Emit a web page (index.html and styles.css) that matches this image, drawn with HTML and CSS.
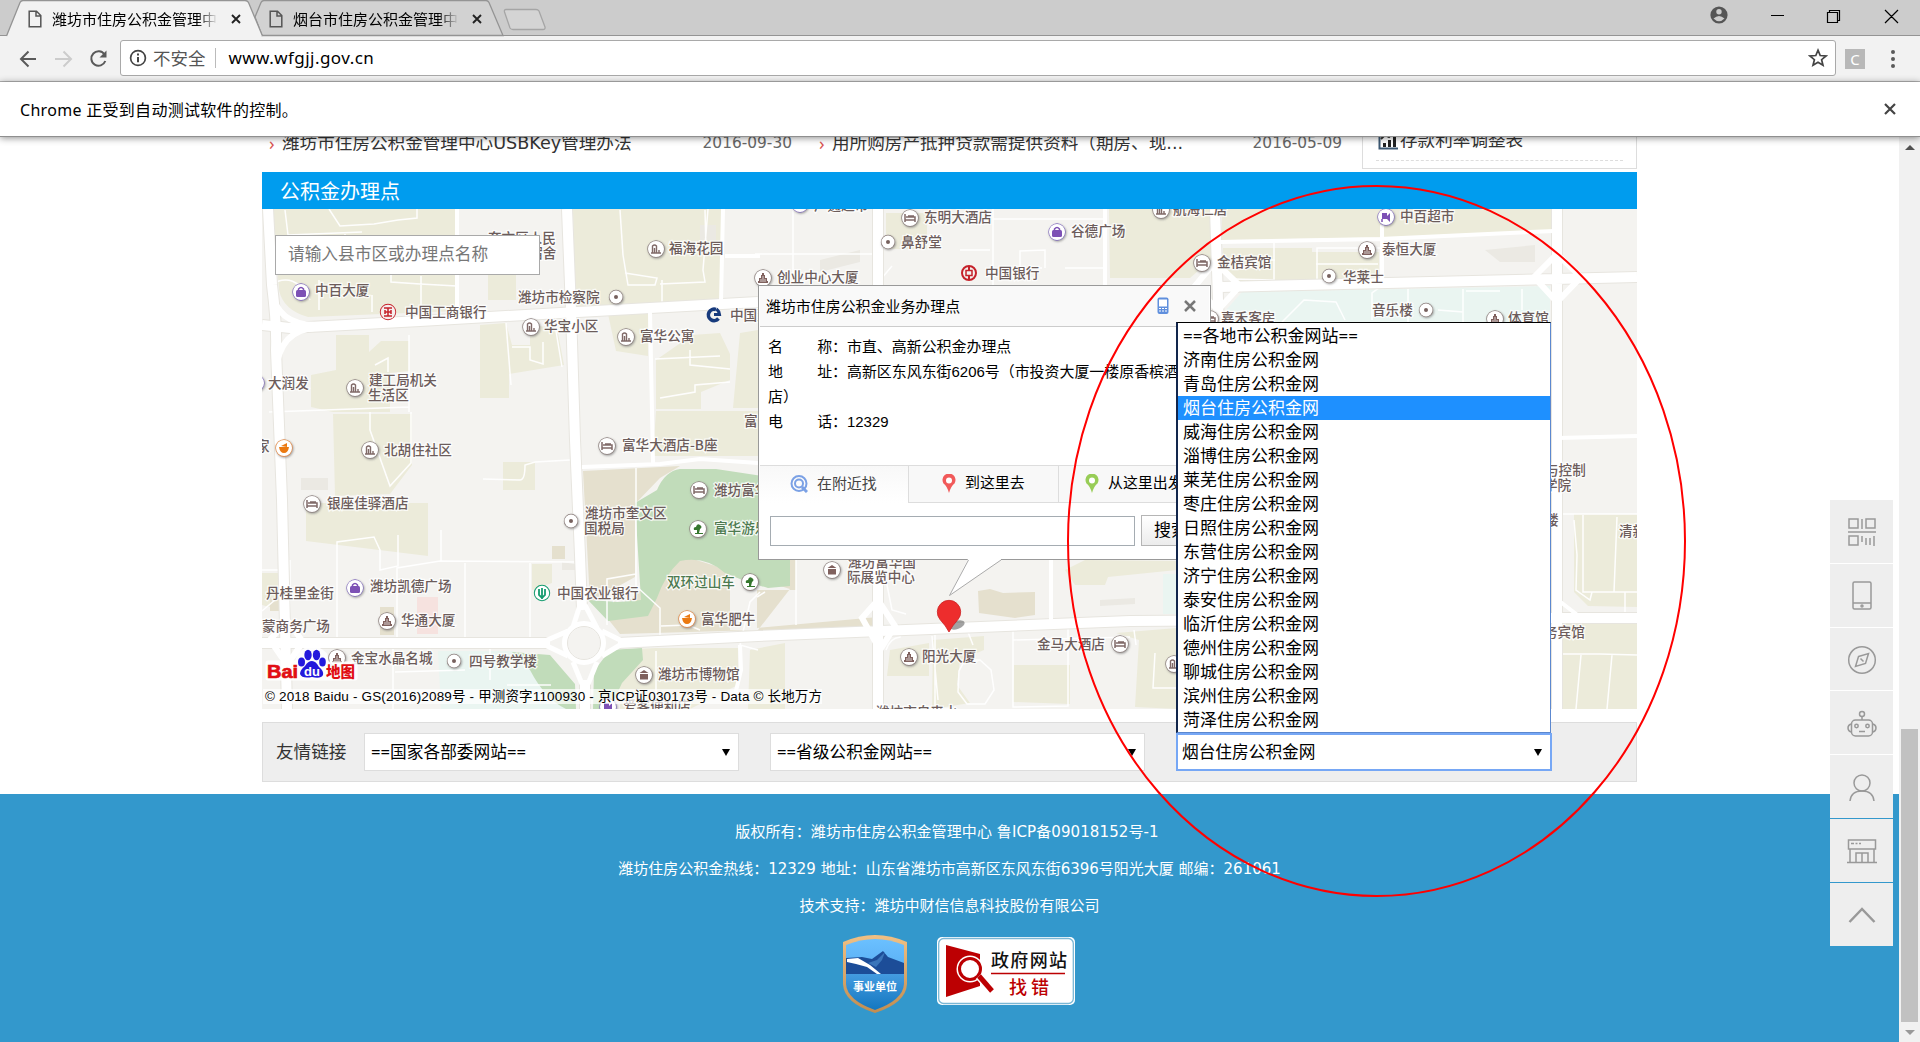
FILE: index.html
```html
<!DOCTYPE html>
<html lang="zh-CN">
<head>
<meta charset="utf-8">
<title>潍坊市住房公积金管理中心</title>
<link rel="stylesheet" href="styles.css">
</head>
<body>
<div class="tabstrip">
  <div class="tab tab-active">
    <svg class="tab-shape" width="256" height="36" viewBox="0 0 256 36"><path d="M-1.500 36L12 2.500Q13 .5 15 .5H237Q239.500 .5 240.500 2.500L254.500 36" fill="#f2f2f2" stroke="#949494" stroke-width="1.300"/></svg>
    <svg class="doc" width="14" height="18" viewBox="0 0 14 18"><path d="M1.200 1.200H8.500L12.800 5.500V16.800H1.200ZM8 1.500V6H12.500" fill="none" stroke="#555" stroke-width="1.500"/></svg>
    <span class="tab-title">潍坊市住房公积金管理中心</span>
    <svg class="x" width="10" height="10" viewBox="0 0 10 10"><path d="M1 1L9 9M9 1L1 9" stroke="#222" stroke-width="1.900"/></svg>
  </div>
  <div class="tab tab-second">
    <svg class="tab-shape" width="250" height="36" viewBox="0 0 250 36"><path d="M1 17L7 2.500Q8 .5 10 .5H232Q234 .5 235 2.500L249 35.500H8Z" fill="#d2d2d2" stroke="#949494" stroke-width="1.300"/></svg>
    <svg class="doc" width="14" height="18" viewBox="0 0 14 18"><path d="M1.200 1.200H8.500L12.800 5.500V16.800H1.200ZM8 1.500V6H12.500" fill="none" stroke="#555" stroke-width="1.500"/></svg>
    <span class="tab-title">烟台市住房公积金管理中心</span>
    <svg class="x" width="10" height="10" viewBox="0 0 10 10"><path d="M1 1L9 9M9 1L1 9" stroke="#222" stroke-width="1.900"/></svg>
  </div>
  <svg class="newtab" width="44" height="24" viewBox="0 0 44 24"><path d="M3 1.500H33Q35 1.500 36 3L42 19Q42.500 21.500 40 21.500H10Q8 21.500 7 20L1.500 4Q1 1.500 3 1.500Z" fill="#d4d4d4" stroke="#a5a5a5" stroke-width="1.300"/></svg>
  <svg class="window-buttons" width="190" height="34" viewBox="1710 0 190 34" fill="none" stroke="#000" stroke-width="1.200">
    <circle cx="1719" cy="15" r="8.600" fill="#555" stroke="none"/><circle cx="1719" cy="11.800" r="2.700" fill="#ccc" stroke="none"/><path d="M1713.500 18.500Q1719 13.500 1724.500 18.500Q1719 24 1713.500 18.500Z" fill="#ccc" stroke="none"/>
    <path d="M1771 15.500H1784M1827.500 12.500H1837.500V22.500H1827.500ZM1829.500 12.500V10.500H1839.500V20.500H1837.500M1885 10L1898 23M1898 10L1885 23"/>
  </svg>
</div>
<div class="toolbar">
  <svg class="nav" width="120" height="44" viewBox="0 36 120 44" fill="none" stroke="#5a5a5a" stroke-width="2">
    <path d="M36 58H21.500M28.500 50.500L21 58L28.500 65.500"/>
    <path d="M55 58H70M63.500 50.500L71 58L63.500 65.500" stroke="#ccc"/>
    <path d="M104.500 53.500A7.200 7.200 0 1 0 105.300 60"/><path d="M106.500 49.500V56.500H99.500Z" fill="#5a5a5a" stroke="none"/>
  </svg>
  <div class="omnibox">
    <svg width="18" height="18" viewBox="0 0 18 18"><circle cx="9" cy="9" r="7.400" fill="none" stroke="#444" stroke-width="1.700"/><path d="M9 8V13.200M9 4.500V6.500" stroke="#444" stroke-width="2"/></svg>
    <span class="insecure">不安全</span><i class="sep"></i><span class="url">www.wfgjj.gov.cn</span>
    <svg class="star" width="20" height="20" viewBox="0 0 20 20"><path d="M10 2.200L12.200 7.500L18 8L13.600 11.700L15 17.300L10 14.300L5 17.300L6.400 11.700L2 8L7.800 7.500Z" fill="none" stroke="#444" stroke-width="1.700"/></svg>
  </div>
  <span class="ext">C</span>
  <svg class="dots" width="6" height="20" viewBox="0 0 6 20" fill="#5a5a5a"><circle cx="3" cy="3" r="2"/><circle cx="3" cy="10" r="2"/><circle cx="3" cy="17" r="2"/></svg>
</div>
<div class="infobar">
  <span>Chrome 正受到自动测试软件的控制。</span>
  <svg width="12" height="12" viewBox="0 0 12 12"><path d="M1 1L11 11M11 1L1 11" stroke="#444" stroke-width="2.200"/></svg>
</div>
<div class="viewport">
<div class="page">
  <div class="content">
    <div class="news">
      <div class="news-item first"><b>›</b><span class="news-title">潍坊市住房公积金管理中心USBKey管理办法</span><time>2016-09-30</time></div>
      <div class="news-item"><b>›</b><span class="news-title">用所购房产抵押贷款需提供资料（期房、现...</span><time>2016-05-09</time></div>
      <div class="rates"><div class="rate-row">
        <svg width="20" height="18" viewBox="0 0 20 18"><path d="M1.500 0V16.500H20" stroke="#3c5873" stroke-width="2" fill="none"/><path d="M5 15V11H8V15ZM10 15V8H13V15ZM15 15V5H18V15Z" fill="#222"/><path d="M3 7L7 3L11 5L17 0" stroke="#333" stroke-width="2" fill="none"/></svg>
        <span>存款利率调整表</span></div></div>
    </div>
    <h2>公积金办理点</h2>
    <div class="map">
      <svg class="map-canvas" width="1375" height="500" viewBox="262 209 1375 500">
        <defs>
          <filter id="sh" x="-30%" y="-30%" width="170%" height="170%"><feDropShadow dx=".8" dy="1" stdDeviation=".8" flood-color="#777" flood-opacity=".7"/></filter>
          <g id="disc"><circle r="8" fill="#fff" stroke="#8d807e" stroke-width="1.400" filter="url(#sh)"/></g>
          <g id="house"><use href="#disc"/><path d="M-3.500 4V-3Q-1.500 -5 .5 -3V4M-1.500 4V-1M3 4V1M5 4H-5" stroke="#806a68" stroke-width="1.400" fill="none"/></g>
          <g id="hotel"><use href="#disc"/><path d="M-5 -4V4M-5 2H5V4M-4 -1H5V2M-2 -2H4" stroke="#806a68" stroke-width="1.500" fill="none"/></g>
          <g id="tower"><use href="#disc"/><path d="M-5 5V3H-4V0H-2V-3H-1V-5H1V-3H2V0H4V3H5V5Z" fill="#80615e"/><path d="M-2 1V4M0 -2V4M2 1V4" stroke="#fff" stroke-width=".7"/></g>
          <g id="dot"><circle r="6.500" fill="#fff" stroke="#8d807e" stroke-width="1.400" filter="url(#sh)"/><circle r="2" fill="#76615e"/></g>
          <g id="bag"><circle r="8" fill="#fff" stroke="#8069bd" stroke-width="1.300" filter="url(#sh)"/><rect x="-5" y="-2" width="10" height="7" rx="1.500" fill="#7d51b5"/><path d="M-2.500 -1V-3Q0 -6 2.500 -3V-1" stroke="#7d51b5" stroke-width="1.500" fill="none"/></g>
          <g id="cart"><circle r="8" fill="#fff" stroke="#8069bd" stroke-width="1.300" filter="url(#sh)"/><path d="M-4 -4H1V2H-4ZM1 -1L4 -4V5L1 2" fill="#7d51b5"/><path d="M-4 5V2" stroke="#7d51b5" stroke-width="1.500"/></g>
          <g id="food"><circle r="8" fill="#fff" stroke="#e08a45" stroke-width="1.400" filter="url(#sh)"/><path d="M-5 -1H5Q4 5 0 5Q-4 5 -5 -1ZM-3 -2L3 -5V-1Z" fill="#eb7911"/></g>
          <g id="tree"><use href="#disc"/><path d="M-4 1Q-5 -2 -2 -2Q-1 -6 2 -4Q5 -2 2 0L1 4H5V5H-3V4H-1V1Z" fill="#36772e"/></g>
          <g id="museum"><use href="#disc"/><path d="M-4.500 -2L0 -5L4.500 -2ZM-4 -1H4V4.500H-4Z" fill="#80615e"/><path d="M-2 0V3M0 0V3M2 0V3" stroke="#fff"/></g>
        </defs>
        <rect x="262" y="209" width="1375" height="500" fill="#f4f3f0"/>
        <g fill="#ecebda">
          <path d="M273 209H457V311L308 317Q283 310 279 290ZM488 243H516V300H488ZM573 209H721V302L575 306ZM480 325L506 323 512 345H530V325L557 328 564 365 509 374V398H480ZM336 335H369V352L381 341H409V371L390 373V412H333L311 407V375L336 370ZM333 414H412V465L390 494 335 496ZM306 503H428V556L306 541ZM608 314H648V356L616 351ZM656 360L692 335 720 333 730 354V380L701 392 701 409H656ZM656 411H758V456H653ZM503 462H535V490H503ZM532 564H552V583L532 590ZM262 573H281V610L262 605Z"/>
          <path d="M886 213H927V249H886ZM1109 209H1213V258L1190 278H1110ZM1222 209H1554V231L1466 236 1222 240ZM1223 248H1312V252H1379V282H1232L1222 265ZM1574 514H1637V607L1588 606 1574 592ZM1554 622H1637V709H1554ZM740 333L758 330V408H733ZM656 648H738V685L690 709H620L618 650ZM750 650L785 643V709H748ZM890 650L929 643V676H887ZM933 640L984 636V650L960 660L957 685 970 703 932 709ZM1014 665H1070V704L1013 702ZM1065 570L1085 560 1177 561V570L1108 577 1105 585H1075ZM1116 633L1177 628V709L1135 707 1139 640ZM1175 561H1200V570H1175Z"/>
        </g>
        <g fill="#ebe9e3"><path d="M276 415L284 420 285 465 278 466ZM301 478H328V490H301ZM445 250H480V262H445ZM820 260L860 250V262L820 272ZM580 565L562 562V570H580ZM700 225V240H716V225ZM1100 600L1135 598V604L1100 606ZM1485 250L1500 262H1535V245Z"/></g>
        <g fill="#eaf5f1"><path d="M1226 310L1242 292 1550 286V330H1226ZM438 651H512L535 660 551 684 570 709H441ZM1163 574H1177V614H1163Z"/></g>
        <path d="M583 471L680 466 660 478 635 504V577L590 602ZM680 555L790 589 758 630 620 634 608 619ZM796 560H878V617L757 628V590H796ZM978 591L990 589 1003 593 1035 592V615L1015 618 979 613ZM886 560H730V630H878ZM552 546H565V559H552ZM270 597H282V611H270ZM380 607H394V635H380Z" fill="#e5e0ce"/>
        <path d="M635 503L657 490Q665 471 680 469L716 469 790 480 790 586 768 588Q745 582 725 573Q706 556 680 561Q665 575 657 598L648 616 608 621 588 600 618 602 641 600ZM512 652L550 655 575 684 576 709H566Q545 699 530 670ZM642 648L610 650 594 671 593 709H610L622 683 643 660Z" fill="#c1dcba"/>
        <rect x="417" y="597" width="21" height="37" fill="#f6e2df"/>
        <g stroke="#fff" fill="none" stroke-width="1.500" opacity=".95">
          <path d="M285 210L288 235L362 232M329 209L340 226 374 224 398 220 417 218V209M281 245H345V232M391 275V282L420 284 457 286M421 276V310M319 280V310M372 312V295M270 285Q295 270 310 300M620 210L623 255 628 285 655 285 657 278 625 273M708 209L703 270 705 282 660 284M662 280V311M706 250L705 210M506 323L511 385M512 347H530V360L543 364 543 342M555 325L562 367M409 335V412M388 372V358L375 365M655 359L720 356M690 350V365L730 369M660 398L695 392V385L730 382M269 412L409 407M370 412V430L390 486 411 463V412"/>
          <path d="M262 570H281M337 645V542L374 537 380 550V570L398 566V535M397 640V568L440 561 574 562M441 561V530M465 563V643M530 563V641M483 479L520 480Q525 480 525 465L535 462 570 460M607 625V579L636 574M636 468V586L660 608V635M661 626L688 625 700 630M760 592L750 602 740 645 758 650M656 651V709M393 644V709M465 670L395 672M507 685H551M490 645V680M290 560V640M262 611L275 600"/>
          <path d="M793 209V285M755 254H876M892 266L876 285M993 209V285M993 219H1105M960 250H990M1045 268V250L1020 251V268M1065 268H1103M1001 268H1042M1317 282V248H1382M1274 243V280L1232 279M1232 260H1275M1316 264H1378M1408 289V322M1463 289V322M1522 289V310M1466 291H1500M1282 322L1304 300 1336 302 1345 320M1438 310 1463 312M1383 285L1372 293V320"/>
          <path d="M796 560V625M757 597L765 592M882 560L892 610 906 614M886 650Q890 638 900 637V624M935 635V709M932 636L938 700M968 632 973 645M1013 630V707L1068 706V628M1013 640 1130 637M1134 630 1136 645M965 660L980 660 991 670 994 690 985 704 967 704 958 692 959 671ZM1155 653 1153 688 1177 688M1557 514H1637M1583 515V592H1637M1574 520 1577 555 1576 590 1590 600 1592 592M1617 517 1614 592M1560 654H1600L1637 655M1581 655 1576 709M1612 655 1607 709M1625 592V615"/>
        </g>
        <g stroke="#e7e5df" fill="none" stroke-width="12"><path d="M268 209L272 285Q277 325 276 350L282 500 287 709M567 209L571 310 575 440 580 555 582 610M585 680V709"/><path d="M262 325L290 328 420 321 560 313 758 302M262 643H550M618 643L758 636 1130 621 1552 618H1637M878 209V285M878 560V709M1215 209L1219 330M1220 287L1637 277M1557 209V709"/></g>
        <g stroke="#fff" fill="none" stroke-width="10"><path d="M268 209L272 285Q277 325 276 350L282 500 287 709M567 209L571 310 575 440 580 555 582 610M585 680V709"/><path d="M262 325L290 328 420 321 560 313 758 302M262 643H550M618 643L758 636 1130 621 1552 618H1637M878 209V285M878 560V709M1215 209L1219 330M1220 287L1637 277M1557 209V709"/></g>
        <g stroke="#fff" fill="none" stroke-width="4"><path d="M457 209V315M723 209L721 302M725 256H760M650 311L653 463M582 467L660 464 700 459 758 463M1105 209V285M1220 242L1380 239 1466 235 1554 231M1382 225V288M1051 560V620M1558 438L1637 436M1558 600L1580 617M740 645 741 670 735 695"/></g>
        <g stroke="#fff" fill="none" stroke-width="6"><path d="M272 290Q276 324 315 325M276 370Q280 330 315 328M1195 286L1215 262 1240 286 1218 310ZM1534 277L1557 254 1581 277 1557 302ZM862 618L878 600 895 626 880 650ZM270 640L287 620 303 642 287 665Z"/></g>
        <g stroke="#fff" fill="none" stroke-width="5"><path d="M545 641L568 631M545 645L568 656M620 640L602 631M620 645L602 656M580 605L573 627M585 605L597 628M582 684L573 662M588 684L597 662"/></g>
        <circle cx="584" cy="643" r="19" fill="#f4f3f0" stroke="#fff" stroke-width="6"/><circle cx="584" cy="643" r="16.500" fill="none" stroke="#e6e4de"/>
        <g class="poi">
          <text x="488" y="243">奎文区人民</text><text x="502" y="258">法院宿舍</text>
          <use href="#bag" x="301" y="292"/><text x="315" y="295">中百大厦</text>
          <g transform="translate(388 312)"><circle r="7.300" fill="#f6eeee" stroke="#c5222b" stroke-width="1.800"/><path d="M-4 -4H4M-4 4H4M-3 0H3M0 -4V4M-3 -2V2M3 -2V2" stroke="#c5222b" stroke-width="1.500"/></g><text x="405" y="317">中国工商银行</text>
          <text x="518" y="302">潍坊市检察院</text><use href="#dot" x="616" y="297"/>
          <use href="#house" x="531" y="327"/><text x="544" y="331">华宝小区</text>
          <use href="#house" x="626" y="337"/><text x="640" y="341">富华公寓</text>
          <use href="#house" x="656" y="249"/><text x="669" y="253">福海花园</text>
          <use href="#bag" x="256" y="383"/><text x="268" y="388">大润发</text>
          <use href="#house" x="355" y="388"/><text x="369" y="385">建工局机关</text><text x="368" y="400">生活区</text>
          <text x="256" y="451">家</text><use href="#food" x="284" y="448"/>
          <use href="#house" x="370" y="450"/><text x="384" y="455">北胡住社区</text>
          <use href="#hotel" x="607" y="446"/><text x="622" y="450">富华大酒店-B座</text><text x="744" y="426">富</text>
          <use href="#hotel" x="312" y="504"/><text x="327" y="508">银座佳驿酒店</text>
          <use href="#hotel" x="699" y="490"/><text x="714" y="495">潍坊富华</text>
          <use href="#dot" x="571" y="521"/><text x="585" y="518">潍坊市奎文区</text><text x="584" y="533">国税局</text>
          <use href="#tree" x="698" y="529"/><text class="green" x="714" y="533">富华游乐园</text>
          <text class="green" x="667" y="587">双环过山车</text><use href="#tree" x="750" y="582"/>
          <text x="266" y="598">丹桂里金街</text><use href="#bag" x="355" y="588"/><text x="370" y="591">潍坊凯德广场</text>
          <text x="262" y="631">蒙商务广场</text><use href="#tower" x="387" y="621"/><text x="401" y="625">华通大厦</text>
          <g transform="translate(542 593)"><circle r="7.200" fill="#fff" stroke="#159c6f" stroke-width="2"/><path d="M0 -5V6M-3 -4V2L0 5L3 2V-4" fill="none" stroke="#159c6f" stroke-width="1.800"/></g><text x="557" y="598">中国农业银行</text>
          <use href="#food" x="687" y="619"/><text x="701" y="624">富华肥牛</text>
          <use href="#tower" x="337" y="658"/><text x="351" y="663">金宝水晶名城</text>
          <use href="#dot" x="454" y="661"/><text x="469" y="666">四号教学楼</text>
          <use href="#museum" x="644" y="675"/><text x="658" y="679">潍坊市博物馆</text>
          <use href="#cart" x="608" y="707"/><text x="623" y="711">爱客便利店</text>
          <use href="#bag" x="800" y="204"/><text x="814" y="210">广通超市</text>
          <use href="#hotel" x="910" y="218"/><text x="924" y="222">东明大酒店</text>
          <use href="#dot" x="888" y="242"/><text x="901" y="247">鼻舒堂</text>
          <use href="#bag" x="1057" y="232"/><text x="1071" y="236">谷德广场</text>
          <use href="#tower" x="763" y="278"/><text x="777" y="282">创业中心大厦</text>
          <g transform="translate(969 273)" fill="none" stroke="#c5222b" stroke-width="2"><circle r="7"/><rect x="-3" y="-2.500" width="6" height="5" stroke-width="1.500"/><path d="M0 -7V-3M0 3V7"/></g><text x="985" y="278">中国银行</text>
          <g fill="none" stroke="#173a7c"><path d="M716 309.500A5.700 5.700 0 1 0 718.500 318.500" stroke-width="3.600"/><path d="M714 314.500H719.500Q719 311 716.500 309" stroke-width="3"/></g><text x="730" y="320">中国建设银行</text>
          <use href="#house" x="1161" y="210"/><text x="1173" y="214">航海仁居</text>
          <use href="#hotel" x="1202" y="263"/><text x="1217" y="267">金桔宾馆</text>
          <use href="#hotel" x="1210" y="319"/><text x="1221" y="323">嘉禾客房</text>
          <use href="#cart" x="1386" y="217"/><text x="1400" y="221">中百超市</text>
          <use href="#tower" x="1367" y="250"/><text x="1382" y="254">泰恒大厦</text>
          <use href="#dot" x="1329" y="276"/><text x="1343" y="282">华莱士</text>
          <text x="1372" y="315">音乐楼</text><use href="#dot" x="1426" y="310"/>
          <use href="#tower" x="1495" y="319"/><text x="1508" y="323">体育馆</text>
          <use href="#museum" x="832" y="570"/><text x="848" y="567">潍坊富华国</text><text x="847" y="582">际展览中心</text>
          <text x="1037" y="649">金马大酒店</text><use href="#hotel" x="1120" y="644"/>
          <use href="#tower" x="909" y="657"/><text x="922" y="661">阳光大厦</text>
          <use href="#house" x="1174" y="664"/><text x="876" y="717">潍坊市自来水</text>
          <text x="1545" y="475">与控制</text><text x="1544" y="490">学院</text><text x="1545" y="525">楼</text>
          <text x="1619" y="536">清新</text><text x="1544" y="637">务宾馆</text>
        </g>
        <ellipse cx="957" cy="625" rx="8" ry="4" fill="#555" opacity=".55" transform="rotate(-20 957 625)"/>
        <path d="M949 632Q946 626 940 619.500A11.700 11.700 0 1 1 958 619.500Q952 626 949 632Z" fill="#ed2d2d" stroke="#cb2325" stroke-width=".8"/>
        <path d="M268 663H297L300 655Q312 642 325 655L326 664H355V678H268Z" stroke="#fff" stroke-width="5" stroke-linejoin="round" fill="#fff" opacity=".9"/>
        <text class="logo-bai" x="267" y="677.500" textLength="31" lengthAdjust="spacingAndGlyphs">Bai</text>
        <g fill="#2319dc"><ellipse cx="301.500" cy="662" rx="3.500" ry="4.600"/><ellipse cx="308" cy="655" rx="3.700" ry="5.200"/><ellipse cx="316.500" cy="655" rx="3.700" ry="5.200"/><ellipse cx="322.500" cy="662" rx="3.300" ry="4.600"/><path d="M312 661Q316 661 319 667Q324 671 323 675Q321 679 312 677Q302 679 300 674Q300 670 305 666Q308 661 312 661Z"/></g>
        <text class="logo-du" x="304" y="676">du</text>
        <text class="logo-map" x="326" y="676.500">地图</text>
        <rect x="263" y="689" width="559" height="15" fill="#fff" opacity=".7"/>
        <text class="copyright" x="265" y="701" textLength="557">© 2018 Baidu - GS(2016)2089号 - 甲测资字1100930 - 京ICP证030173号 - Data © 长地万方</text>
      </svg>
      <div class="map-search">请输入县市区或办理点名称</div>
      <div class="popup">
        <div class="popup-head"><span>潍坊市住房公积金业务办理点</span>
          <svg width="12" height="18" viewBox="0 0 12 18"><rect x=".5" y=".5" width="11" height="16.500" rx="2" fill="#5f8fdd"/><rect x="2" y="2.500" width="8" height="7" fill="#fff"/><path d="M2 11.500H10M2 14H10" stroke="#fff" stroke-dasharray="2 1"/></svg>
          <svg class="px" width="12" height="12" viewBox="0 0 12 12"><path d="M1 1L11 11M11 1L1 11" stroke="#777" stroke-width="2.500"/></svg>
        </div>
        <div class="popup-body">
          <div><span class="k"><i>名</i><i>称：</i></span>市直、高新公积金办理点</div>
          <div><span class="k"><i>地</i><i>址：</i></span>高新区东风东街6206号（市投资大厦一楼原香槟酒店）</div>
          <div><span class="k"><i>电</i><i>话：</i></span>12329</div>
        </div>
        <div class="popup-tabs">
          <div class="on"><svg width="18" height="18" viewBox="0 0 18 18" fill="none" stroke="#7ba1e5"><circle cx="9" cy="8.500" r="7.500" stroke-width="2"/><circle cx="9" cy="8.500" r="4" stroke-width="2"/><path d="M12 12L17 17" stroke-width="3"/></svg>在附近找</div>
          <div><svg width="14" height="19" viewBox="0 0 14 19"><path d="M7 19Q5 12 1.500 9.500A6.500 6.500 0 1 1 12.500 9.500Q9 12 7 19Z" fill="#f15a5a"/><circle cx="7" cy="6.500" r="3" fill="#fff"/></svg>到这里去</div>
          <div><svg width="14" height="19" viewBox="0 0 14 19"><path d="M7 19Q5 12 1.500 9.500A6.500 6.500 0 1 1 12.500 9.500Q9 12 7 19Z" fill="#98cd57"/><circle cx="7" cy="6.500" r="3" fill="#fff"/></svg>从这里出发</div>
        </div>
        <div class="popup-find"><div class="field"></div><div class="btn">搜索</div></div>
        <svg class="tail" width="60" height="40" viewBox="945 559 60 40"><path d="M968 559L949.500 595.500L1001 560V559Z" fill="#fff"/><path d="M968.500 560L949.500 595.500L1001 560" fill="none" stroke="#aaa"/></svg>
      </div>
    </div>
    <div class="links">
      <label>友情链接</label>
      <div class="select">==国家各部委网站==<i></i></div>
      <div class="select">==省级公积金网站==<i></i></div>
      <div class="select focus">烟台住房公积金网<i></i>
        <ul class="options"><li>==各地市公积金网站==</li><li>济南住房公积金网</li><li>青岛住房公积金网</li><li class="sel">烟台住房公积金网</li><li>威海住房公积金网</li><li>淄博住房公积金网</li><li>莱芜住房公积金网</li><li>枣庄住房公积金网</li><li>日照住房公积金网</li><li>东营住房公积金网</li><li>济宁住房公积金网</li><li>泰安住房公积金网</li><li>临沂住房公积金网</li><li>德州住房公积金网</li><li>聊城住房公积金网</li><li>滨州住房公积金网</li><li>菏泽住房公积金网</li></ul>
      </div>
    </div>
  </div>
  <footer>
    <p class="l1">版权所有：潍坊市住房公积金管理中心 鲁ICP备09018152号-1</p>
    <p class="l2">潍坊住房公积金热线：12329 地址：山东省潍坊市高新区东风东街6396号阳光大厦 邮编：261061</p>
    <p>技术支持：潍坊中财信信息科技股份有限公司</p>
    <div class="badges">
      <svg width="66" height="80" viewBox="842 934 66 80">
        <defs><linearGradient id="gold" x2="0" y2="1"><stop offset="0" stop-color="#f0c084"/><stop offset="1" stop-color="#c18d51"/></linearGradient><linearGradient id="sky" x2="0" y2="1"><stop offset="0" stop-color="#6bc0ff"/><stop offset="1" stop-color="#57adf2"/></linearGradient><linearGradient id="low" x2="0" y2="1"><stop offset="0" stop-color="#449be0"/><stop offset="1" stop-color="#1377c0"/></linearGradient></defs>
        <path d="M843 942Q875 928 907 942V984Q906 1003 875 1013Q844 1003 843 984Z" fill="url(#gold)"/>
        <path d="M846 945Q875 933 904 945V974H846Z" fill="url(#sky)"/><path d="M846 974H904V984Q903 1000 875 1010Q847 1000 846 984Z" fill="url(#low)"/>
        <path d="M846 958L862 957 872 959 883 951 888 957 904 963V974H846Z" fill="#1c4d98"/>
        <path d="M847 959L858 958 870 965 881 974H877L867 967 856 964 847 962Z" fill="#fff"/><path d="M868 963L877 960 885 952 882 960 876 967Z" fill="#3a75ba"/>
        <text class="unit" x="853" y="991" textLength="44">事业单位</text>
      </svg>
      <svg width="138" height="68" viewBox="937 937 138 68">
        <rect x="937" y="937" width="138" height="68" rx="5" fill="#fff"/><rect x="938.700" y="938.500" width="134.600" height="65" rx="5" fill="#fff" stroke="#7bb7d5" stroke-width="1.300"/>
        <path d="M946 945L980 954V986L946 997Z" fill="#bc0002"/>
        <circle cx="970" cy="969" r="13.500" fill="#fff"/><circle cx="970" cy="969" r="10.500" fill="#fff" stroke="#bc0002" stroke-width="3"/><path d="M979 976L993 992" stroke="#fff" stroke-width="8"/><path d="M979 976L992 991" stroke="#bc0002" stroke-width="5"/>
        <text class="gov" x="991" y="967" textLength="76">政府网站</text><path d="M991 973.500H1065" stroke="#bc0002" stroke-width="1.500"/><text class="gov red" x="1009" y="994" textLength="40">找错</text>
      </svg>
    </div>
  </footer>
  <aside>
    <div><svg width="28" height="28" viewBox="0 0 28 28"><path d="M1 1H10V10H1ZM18 1H27V10H18ZM14 1V11M0 14H28M1 18H10V27H1ZM14 18V24M18 20V27M22 20V27M26 18V28"/></svg></div>
    <div><svg width="20" height="30" viewBox="0 0 20 30"><rect x="1" y="1" width="18" height="27" rx="1.500"/><path d="M1 22H19"/><circle cx="10" cy="25" r="1"/></svg></div>
    <div><svg width="30" height="30" viewBox="0 0 30 30"><circle cx="15" cy="15" r="13.300"/><path d="M11.500 11.500L21.500 8.500 18.500 18.500 8.500 21.500ZM13.500 13.500L16.500 16.500"/></svg></div>
    <div class="robot"><svg width="30" height="28" viewBox="0 0 30 28"><rect x="4.500" y="10" width="21" height="16" rx="4"/><circle cx="15" cy="4" r="2.500"/><path d="M15 6.500V10M4 14Q1 15 1 18Q1 21 4 22M26 14Q29 15 29 18Q29 21 26 22M12 21.500H18"/><circle cx="9.500" cy="16" r="1.700"/><circle cx="20.500" cy="16" r="1.700"/></svg></div>
    <div><svg width="28" height="30" viewBox="0 0 28 30"><circle cx="14" cy="10" r="8"/><path d="M2 28Q3 18 14 18Q25 18 26 28"/></svg></div>
    <div><svg width="30" height="26" viewBox="0 0 30 26"><path d="M1.500 2H28.500V11H1.500ZM3 11V24M27 11V24M0 24.500H30M9 24V15H21V24M15 15V24M4 5.500H7M8.500 5.500H10.500M12 5.500H14"/></svg></div>
    <div><svg width="28" height="18" viewBox="0 0 28 18"><path d="M1.500 16L14 3L26.500 16" stroke-width="2.500"/></svg></div>
  </aside>
  <svg class="annotation" width="630" height="720" viewBox="1062 181 630 720"><ellipse cx="1376.500" cy="541" rx="308.500" ry="355" fill="none" stroke="#f00" stroke-width="2"/></svg>
</div>
<div class="scrollbar"><i class="up"></i><i class="thumb"></i><i class="down"></i></div>
</div>
</body>
</html>
```
FILE: styles.css
```css
* { box-sizing: border-box; }
body { margin: 0; height: 1042px; overflow: hidden; display: flex; flex-direction: column; background: #fff; font-family: "Noto Sans", "Noto Sans CJK SC", sans-serif; color: #000; }
i { font-style: normal; }
svg { flex: none; display: block; }

.tabstrip { height: 36px; flex: none; background: #ccc; border-bottom: 1px solid #949494; display: flex; padding-left: 8px; }
.tab { position: relative; height: 36px; display: flex; align-items: center; padding: 2px 0 0 20px; }
.tab-active { width: 254px; z-index: 2; }
.tab-second { width: 241px; padding-left: 7px; }
.tab-shape { position: absolute; left: 0; top: 0; overflow: visible; }
.tab-second .tab-shape { left: -8px; }
.doc, .tab .x { position: relative; }
.tab-title { position: relative; width: 167px; margin-left: 10px; overflow: hidden; white-space: nowrap; font-size: 15px; line-height: 22px; -webkit-mask-image: linear-gradient(90deg, #000 145px, transparent 166px); }
.tab .x { margin-left: 12px; }
.newtab { margin-top: 8px; }
.window-buttons { margin-left: auto; margin-right: 20px; }

.toolbar { height: 46px; flex: none; background: #f2f2f2; border-bottom: 1px solid #b5b5b5; display: flex; align-items: center; }
.omnibox { width: 1716px; height: 36px; margin-bottom: 1px; border: 1px solid #a9a9a9; border-radius: 3px; background: #fff; display: flex; align-items: center; padding-left: 8px; font-size: 17px; line-height: 24px; }
.insecure { margin-left: 6px; color: #555; font-size: 17.500px; }
.sep { width: 1px; height: 20px; background: #bbb; margin: 0 13px 0 9px; }
.url { font-size: 17px; letter-spacing: .45px; }
.star { margin-left: auto; margin-right: 7px; }
.ext { width: 20px; height: 20px; margin-left: 9px; background: #b8b8b8; color: #fff; text-align: center; font-size: 15px; line-height: 20px; }
.dots { margin-left: 25px; }

.infobar { height: 55px; flex: none; position: relative; z-index: 5; background: #fff; border-bottom: 1px solid #8f8f8f; box-shadow: 0 1px 7px rgba(0,0,0,.45); display: flex; align-items: center; justify-content: space-between; padding: 0 24px 1px 20px; font-size: 16px; letter-spacing: .3px; }

.viewport { flex: 1; min-height: 0; display: flex; }
.page { position: relative; width: 1899px; overflow: hidden; }
.content { width: 1375px; margin-left: 262px; }
.news { height: 35px; display: flex; }
.news-item { width: 550px; height: 24px; margin-top: -6px; padding-left: 7px; display: flex; align-items: center; white-space: nowrap; font-size: 17.600px; line-height: 24px; color: #333; }
.news-title { font-family: "DejaVu Sans", "Noto Sans CJK SC", sans-serif; font-size: 17.600px; }
.news-item b { width: 13px; color: #d9534f; font-weight: 400; font-size: 18px; }
.news-item time { margin-left: auto; margin-right: 20px; font-family: "DejaVu Sans", sans-serif; font-size: 15.400px; color: #666; }
.rates { width: 275px; height: 32px; border: 1px solid #ddd; border-top: 0; padding: 0 13px; }
.rate-row { height: 24px; border-bottom: 1px dashed #ddd; display: flex; align-items: flex-start; gap: 2px; padding-left: 2px; font-size: 17.600px; line-height: 24px; color: #333; }
.rate-row svg { margin-top: -5px; }
.rate-row span { margin-top: -10px; }
h2 { margin: 0; height: 37px; padding-left: 18px; background: #009cee; color: #fff; font-size: 20px; font-weight: 400; line-height: 39px; }

.map { position: relative; height: 500px; }
.poi { font: 500 13.600px "Noto Sans CJK SC", sans-serif; fill: #6c5c5b; stroke: #fff; stroke-width: 0; paint-order: stroke; }
.poi text { stroke-width: 2.500px; stroke-opacity: .8; }
.poi .green { fill: #4d7a50; }
.logo-bai { font: bold 19px "Liberation Sans", sans-serif; fill: #e10e13; stroke: #e10e13; stroke-width: .7px; }
.logo-du { font: bold 13px "Liberation Sans", sans-serif; fill: #fff; }
.logo-map { font: 900 14.500px "Noto Sans CJK SC", sans-serif; fill: #e10e13; }
.copyright { font: 13.500px "Liberation Sans", "Noto Sans CJK SC", sans-serif; }
.map-search { position: absolute; left: 13px; top: 26px; width: 265px; height: 40px; border: 1px solid #a9a9a9; background: #fff; padding-left: 12px; font-size: 16.700px; line-height: 36px; color: #777; }

.popup { position: absolute; left: 496px; top: 76px; width: 453px; height: 275px; background: #fff; border: 1px solid #999; font-family: "Liberation Sans", "Noto Sans CJK SC", sans-serif; font-size: 14.950px; }
.popup-head { height: 41px; margin: 0 1px; background: #f9f9f9; border-bottom: 1px solid #ccc; display: flex; align-items: center; padding: 0 13px 0 6px; }
.popup-head span { flex: 1; padding-bottom: 2px; }
.px { margin-left: 15px; }
.popup-body { height: 138px; padding: 7px 26px 0 9px; line-height: 25px; }
.k { display: inline-flex; width: 79px; justify-content: space-between; }
.popup-tabs { height: 38px; margin: 0 1px; display: flex; border-top: 1px solid #ddd; line-height: 34px; }
.popup-tabs div { width: 150px; display: flex; align-items: center; gap: 9px; padding: 0 0 2px 33px; background: #f8f8f8; border-right: 1px solid #ddd; border-bottom: 1px solid #ddd; }
.popup-tabs div:nth-child(3) { padding-left: 26px; }
.popup-tabs .on { width: 149px; padding-left: 30px; background: linear-gradient(#f8f8f8, #fff); border-bottom: 0; color: #444; }
.popup-find { display: flex; gap: 6px; padding: 12px 0 0 11px; }
.field { width: 365px; height: 30px; border: 1px solid #a5acb2; margin-top: 1px; }
.btn { width: 60px; height: 31px; border: 1px solid #b5b5b5; background: linear-gradient(#fff, #ececec); font-size: 17px; line-height: 30px; padding-left: 12px; }
.tail { position: absolute; left: 186px; top: 273px; }

.links { height: 60px; margin-top: 13px; background: #eee; border: 1px solid #ddd; display: flex; align-items: flex-start; padding: 10px 0 0 13px; }
.links label { width: 88px; font-size: 17.600px; line-height: 37px; color: #333; }
.select { position: relative; width: 375px; height: 38px; margin-right: 31px; padding-left: 6px; border: 1px solid #ddd; background: #fff; font-size: 16.700px; line-height: 36px; white-space: nowrap; }
.select > i { position: absolute; right: 8px; top: 15px; border: 4px solid transparent; border-top: 7px solid #000; border-bottom: 0; }
.select.focus { width: 376px; margin: 0; border: 2px solid #76a7f5; padding-left: 4px; line-height: 34px; }
.select.focus > i { top: 14px; }
.options { position: absolute; left: -2px; top: -413px; width: 375px; height: 411px; margin: 0; padding: 1px 0 0; list-style: none; background: #fff; border: 1px solid #5c88cf; border-left: 2px solid #12264c; border-top-color: #000; font-size: 17px; }
.options li { height: 24px; line-height: 24px; padding-left: 5px; }
.options .sel { background: #1e90ff; color: #fff; }

footer { height: 248px; margin-top: 12px; background: #3398cc; color: #fff; padding-top: 20px; text-align: center; font-family: "DejaVu Sans", "Noto Sans CJK SC", sans-serif; font-size: 15px; }
footer p { margin: 0; height: 37px; line-height: 36px; white-space: nowrap; }
.l1 { letter-spacing: .1px; padding-right: 5px; }
.l2 { letter-spacing: 0; }
.badges { display: flex; align-items: center; gap: 29px; margin: 9px 0 0 842px; }
.badges svg + svg { margin-top: -6px; }
.unit { font: bold 11px "Noto Sans CJK SC", sans-serif; fill: #fff; }
.gov { font: 500 18px "Noto Sans CJK SC", sans-serif; fill: #111; }
.gov.red { fill: #bc0002; }

aside { position: absolute; left: 1830px; top: 363px; display: flex; flex-direction: column; gap: 1px; }
aside div { width: 63px; height: 62.800px; padding: 2px 0 0 1px; background: #eee; display: flex; align-items: center; justify-content: center; }
aside svg { fill: none; stroke: #999; stroke-width: 1.500; }
.annotation { position: absolute; left: 1062px; top: 44px; z-index: 4; }

.scrollbar { width: 21px; background: #f1f1f1; display: flex; flex-direction: column; align-items: center; }
.up { border: 5px solid transparent; border-bottom-color: #505050; border-top: 0; margin: 8px 0 0; }
.thumb { width: 17px; height: 293px; background: #c1c1c1; margin-top: 579px; }
.down { border: 5px solid transparent; border-top-color: #999; border-bottom: 0; margin-top: 8px; }
```
